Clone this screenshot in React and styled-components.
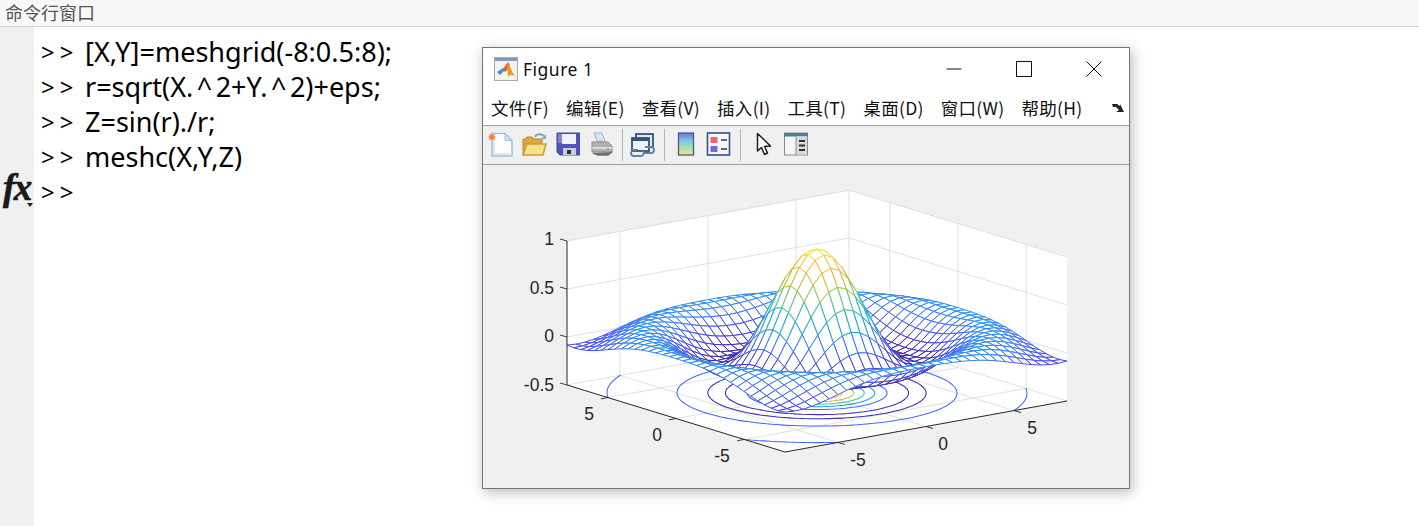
import React from "react";
import styled, { createGlobalStyle } from "styled-components";

const GlobalStyle = createGlobalStyle`
  html, body { margin: 0; padding: 0; background: #fff; }
  body { overflow: hidden; }
`;

const Page = styled.div`
  position: relative;
  width: 1419px;
  height: 526px;
  overflow: hidden;
  display: flex;
  flex-direction: column;
  background: #fff;
`;

const WindowHeader = styled.div`
  height: 26px;
  flex: none;
  padding-left: 5px;
  background: #f8f8f8;
  border-bottom: 1px solid #d4d4d4;
  color: #555;
  font: 18px/25px "Noto Sans CJK SC", "Noto Sans", sans-serif;
`;

const Console = styled.div`
  flex: 1;
  display: flex;
`;

const Gutter = styled.div`
  position: relative;
  width: 34px;
  flex: none;
  background: #f0f0f0;
`;

const FxLabel = styled.div`
  padding: 138px 0 0 3px;
  color: #1a1a1a;
  font: italic bold 37px/46px "Liberation Serif", serif;
  letter-spacing: -1.5px;
  -webkit-text-stroke: 0.6px #1a1a1a;
`;

const FxCaret = styled.div`
  position: absolute;
  left: 27px;
  top: 176px;
  border-left: 3px solid transparent;
  border-right: 3px solid transparent;
  border-top: 4px solid #222;
`;

const Lines = styled.div`
  padding: 7px 0 0 7px;
  color: #000;
  font: 27px/35px "Noto Sans", sans-serif;
`;

const Line = styled.div`
  display: flex;
  height: 35px;
  white-space: pre;
`;

const Prompt = styled.span`
  width: 44px;
  flex: none;
  font-size: 24px;
  letter-spacing: 5px;
`;

const Hat = styled.span`
  margin: 0 3.5px;
`;

/* matlab figure sits on top of the console like a desktop window */
const Figure = styled.div`
  position: absolute;
  left: 482px;
  top: 47px;
  width: 646px;
  height: 440px;
  display: flex;
  flex-direction: column;
  background: #f0f0f0;
  border: 1px solid #767676;
  box-shadow: 2px 3px 12px rgba(0, 0, 0, 0.28);
`;

const TitleBar = styled.div`
  height: 42px;
  flex: none;
  display: flex;
  align-items: center;
  padding-left: 11px;
  background: #fff;
`;

const Title = styled.span`
  margin-left: 5px;
  color: #111;
  font: 17.5px "Noto Sans", sans-serif;
  letter-spacing: 0.5px;
`;

const WindowButton = styled.div`
  width: 70px;
  height: 42px;
  display: flex;
  align-items: center;
  justify-content: center;
  margin-left: ${(p) => (p.$first ? "auto" : "0")};
`;

const MenuBar = styled.div`
  height: 35px;
  flex: none;
  display: flex;
  align-items: center;
  gap: 17px;
  padding-left: 8px;
  background: #fff;
  border-bottom: 1px solid #a0a0a0;
  color: #111;
  font: 17.5px "Noto Sans CJK SC", "Noto Sans", sans-serif;
  letter-spacing: 0.3px;
`;

const MenuItem = styled.span`
  white-space: nowrap;
`;

const MenuArrow = styled.svg`
  margin-left: auto;
  margin-right: 5px;
`;

const Toolbar = styled.div`
  height: 38px;
  flex: none;
  display: flex;
  align-items: center;
  background: #f0f0f0;
  border-bottom: 1px solid #a0a0a0;
  padding-left: 0.5px;
`;

const ToolButton = styled.div`
  width: 33.5px;
  height: 26px;
  display: flex;
  justify-content: center;
`;

const ToolSeparator = styled.div`
  width: 1px;
  height: 32px;
  margin: 0 4px;
  background: #b4b4b4;
`;

const PlotArea = styled.div`
  flex: 1;
  background: #f0f0f0;
`;

const TickLabel = styled.text`
  fill: #262626;
  font: 17.5px "Liberation Sans", sans-serif;
`;

// projection of data coords onto screen pixels, fitted to the axes corners
const project = (x, y, z) => {
  const u = (x + 8) / 16;
  const v = (y + 8) / 16;
  const w = (z + 0.5) / 1.5;
  return [785 + u * 282 - v * 218, 452 - u * 51 - v * 67 - w * 144];
};

const PARULA = [
  [0.2422, 0.1504, 0.6603],
  [0.2803, 0.2782, 0.9221],
  [0.244, 0.4358, 0.9988],
  [0.154, 0.5902, 0.9218],
  [0.0297, 0.7082, 0.8163],
  [0.1938, 0.7758, 0.6251],
  [0.5044, 0.7993, 0.348],
  [0.78, 0.75, 0.2],
  [0.95, 0.7, 0.22],
  [0.99, 0.78, 0.2],
  [0.98, 0.93, 0.1],
];

const parula = (z) => {
  const t = Math.min(1, Math.max(0, (z + 0.2172) / 1.2172)) * 10;
  const i = Math.min(9, Math.floor(t));
  const f = t - i;
  const c = PARULA[i].map((a, k) => Math.round((a + (PARULA[i + 1][k] - a) * f) * 255));
  return `rgb(${c[0]},${c[1]},${c[2]})`;
};

const sinc = (x, y) => {
  const r = Math.sqrt(x * x + y * y) + 2.2e-16;
  return Math.sin(r) / r;
};

const pt = (p) => `${p[0].toFixed(2)} ${p[1].toFixed(2)}`;
const seg = (a, b) => `M${pt(project(a[0], a[1], a[2]))}L${pt(project(b[0], b[1], b[2]))}`;

const buildGrid = () => {
  const parts = [];
  const ticks = [-5, 0, 5];
  ticks.forEach((t) => {
    parts.push(seg([t, -8, -0.5], [t, 8, -0.5]));
    parts.push(seg([-8, t, -0.5], [8, t, -0.5]));
    parts.push(seg([t, 8, -0.5], [t, 8, 1]));
    parts.push(seg([8, t, -0.5], [8, t, 1]));
  });
  [-0.5, 0, 0.5, 1].forEach((z) => {
    parts.push(seg([-8, 8, z], [8, 8, z]));
    parts.push(seg([8, 8, z], [8, -8, z]));
  });
  parts.push(seg([8, 8, -0.5], [8, 8, 1]));
  return parts.join("");
};

const buildContour = (level, step = 0.25) => {
  let d = "";
  const n = Math.round(16 / step);
  const cross = (x1, y1, z1, x2, y2, z2) => {
    const f = (level - z1) / (z2 - z1);
    return [x1 + (x2 - x1) * f, y1 + (y2 - y1) * f, -0.5];
  };
  for (let i = 0; i < n; i++) {
    for (let j = 0; j < n; j++) {
      const x = -8 + i * step;
      const y = -8 + j * step;
      const X = x + step;
      const Y = y + step;
      const a = sinc(x, y);
      const b = sinc(X, y);
      const c = sinc(X, Y);
      const e = sinc(x, Y);
      const hits = [];
      if (a < level !== b < level) hits.push(cross(x, y, a, X, y, b));
      if (b < level !== c < level) hits.push(cross(X, y, b, X, Y, c));
      if (c < level !== e < level) hits.push(cross(X, Y, c, x, Y, e));
      if (e < level !== a < level) hits.push(cross(x, Y, e, x, y, a));
      if (hits.length >= 2) d += seg(hits[0], hits[1]);
      if (hits.length === 4) d += seg(hits[2], hits[3]);
    }
  }
  return d;
};

const buildQuads = () => {
  const quads = [];
  for (let i = 31; i >= 0; i--) {
    for (let j = 31; j >= 0; j--) {
      const x = -8 + i * 0.5;
      const y = -8 + j * 0.5;
      const v = [
        [x, y],
        [x + 0.5, y],
        [x + 0.5, y + 0.5],
        [x, y + 0.5],
      ].map(([a, b]) => [a, b, sinc(a, b)]);
      quads.push(v);
    }
  }
  return quads;
};

const GRID = buildGrid();
const CONTOURS = [-0.2, 0, 0.2, 0.4, 0.6, 0.8].map((l) => ({ level: l, d: buildContour(l) }));
const QUADS = buildQuads();

const MeshQuad = ({ v }) => {
  const s = v.map((p) => project(p[0], p[1], p[2]));
  return (
    <g>
      <polygon points={s.map((p) => p.join(",")).join(" ")} fill="#fff" />
      {s.map((p, i) => {
        const k = (i + 1) % 4;
        return (
          <line
            key={i}
            x1={p[0]}
            y1={p[1]}
            x2={s[k][0]}
            y2={s[k][1]}
            stroke={parula(Math.min(v[i][2], v[k][2]))}
            strokeWidth="1"
          />
        );
      })}
    </g>
  );
};

const Tick = ({ at, dx, dy }) => {
  const p = project(at[0], at[1], at[2]);
  return <line x1={p[0]} y1={p[1]} x2={p[0] + dx} y2={p[1] + dy} stroke="#262626" strokeWidth="0.9" />;
};

const Plot = () => (
  <svg width="646" height="323" viewBox="483 165 646 323" style={{ display: "block" }}>
    <polygon points="567,241 567,385 785,452 1067,401 1067,257 850,191" fill="#fff" />
    <path d={GRID} fill="none" stroke="#dcdcdc" strokeWidth="0.9" />
    {CONTOURS.map((c) => (
      <path key={c.level} d={c.d} fill="none" stroke={parula(c.level)} strokeWidth="1.05" strokeLinecap="round" />
    ))}
    {QUADS.map((v, i) => (
      <MeshQuad key={i} v={v} />
    ))}
    <path d="M567 241V385L785 452L1067 401" fill="none" stroke="#262626" strokeWidth="1" />
    {[-0.5, 0, 0.5, 1].map((z) => (
      <Tick key={z} at={[-8, 8, z]} dx={-7} dy={-2} />
    ))}
    {[-5, 0, 5].map((t) => (
      <Tick key={"x" + t} at={[t, -8, -0.5]} dx={7} dy={2} />
    ))}
    {[-5, 0, 5].map((t) => (
      <Tick key={"y" + t} at={[-8, t, -0.5]} dx={-7} dy={1.3} />
    ))}
    <TickLabel x="554" y="245" textAnchor="end">1</TickLabel>
    <TickLabel x="554" y="294" textAnchor="end">0.5</TickLabel>
    <TickLabel x="554" y="342" textAnchor="end">0</TickLabel>
    <TickLabel x="554" y="391" textAnchor="end">-0.5</TickLabel>
    <TickLabel x="589" y="420" textAnchor="middle">5</TickLabel>
    <TickLabel x="657" y="441" textAnchor="middle">0</TickLabel>
    <TickLabel x="722" y="462" textAnchor="middle">-5</TickLabel>
    <TickLabel x="858" y="466" textAnchor="middle">-5</TickLabel>
    <TickLabel x="943" y="450" textAnchor="middle">0</TickLabel>
    <TickLabel x="1032" y="434" textAnchor="middle">5</TickLabel>
  </svg>
);

const Icon = ({ children }) => (
  <svg width="26" height="26" viewBox="0 0 26 26">
    {children}
  </svg>
);

const NewIcon = () => (
  <Icon>
    <path d="M5 1.5H18L25 8.5V24H5Z" fill="#fff" stroke="#9cc0e4" strokeWidth="1.5" />
    <path d="M18 1.5V8.5H25Z" fill="#cfe2f5" stroke="#9cc0e4" strokeWidth="1" />
    <path d="M7 8V22H23" fill="none" stroke="#dbe9f7" strokeWidth="2" />
    <path d="M5 0V10M0.5 5H9.5M2 2L8 8M8 2L2 8" stroke="#f4a66a" strokeWidth="1.1" />
    <circle cx="5" cy="5" r="2.6" fill="#ee7f35" />
  </Icon>
);

const OpenIcon = () => (
  <Icon>
    <path d="M2 22V7H4L6 5H11L13 7H21V22Z" fill="#d8aa3a" stroke="#b08a2e" strokeWidth="1" />
    <path d="M2 23L6 12H25L22 23Z" fill="#f9e08a" stroke="#c89c30" strokeWidth="1.4" />
    <path d="M14 5C15 2 20 1 23 4" fill="none" stroke="#8aa6c2" strokeWidth="2" />
    <path d="M25 2V7H20Z" fill="#8aa6c2" />
  </Icon>
);

const SaveIcon = () => (
  <Icon>
    <path d="M3 1H26V23H6L3 20Z" fill="#5353bb" stroke="#3c4a8c" strokeWidth="1" />
    <rect x="4" y="2" width="4" height="9" fill="#8284dc" />
    <rect x="8" y="2" width="14" height="10" fill="#eef3fb" />
    <rect x="9" y="16" width="13" height="7" fill="#c9cbdc" />
    <rect x="13" y="18" width="4" height="4" fill="#303040" />
  </Icon>
);

const PrintIcon = () => (
  <Icon>
    <path d="M6 1H14L17 9H9Z" fill="#d7e6f2" stroke="#a6b6c2" strokeWidth="1" />
    <path d="M4 10H20L24 14V20H4Z" fill="#b2b2b2" stroke="#8a8a8a" strokeWidth="1" />
    <path d="M4 16H24" stroke="#e6e6e6" strokeWidth="1.5" />
    <path d="M5 21L10 23H20L24 20" fill="#707070" stroke="#707070" strokeWidth="1.4" />
    <circle cx="20" cy="17" r="1" fill="#6bb36b" />
  </Icon>
);

const PreviewIcon = () => (
  <Icon>
    <rect x="6" y="2" width="17" height="13" fill="#dfe8f1" stroke="#33537c" strokeWidth="1.8" />
    <rect x="2" y="6" width="17" height="13" fill="#eef3f8" stroke="#33537c" strokeWidth="1.8" />
    <rect x="2" y="6" width="17" height="3" fill="#33537c" />
    <path d="M8 18H4a3 3 0 0 0 0 6H11a3 3 0 0 0 2-5" fill="none" stroke="#5f7fa3" strokeWidth="1.8" />
    <path d="M13 21H21a3 3 0 0 0 0-6H15" fill="none" stroke="#5f7fa3" strokeWidth="1.8" />
  </Icon>
);

const ColorbarIcon = () => (
  <Icon>
    <defs>
      <linearGradient id="cbar" x1="0" y1="0" x2="0" y2="1">
        <stop offset="0" stopColor="#7c6fd8" />
        <stop offset="0.35" stopColor="#7fc4e8" />
        <stop offset="0.65" stopColor="#a8e0b4" />
        <stop offset="1" stopColor="#f6df8a" />
      </linearGradient>
    </defs>
    <rect x="5.5" y="1" width="15" height="22" fill="url(#cbar)" stroke="#4a5a86" strokeWidth="1.3" />
  </Icon>
);

const LegendIcon = () => (
  <Icon>
    <rect x="1.5" y="1" width="22" height="22" fill="#f6f8fb" stroke="#34508c" strokeWidth="1.6" />
    <rect x="4.5" y="5" width="7" height="6" fill="#e8686c" />
    <rect x="4.5" y="14" width="7" height="6" fill="#6a6aee" />
    <path d="M15 8H21M15 17H21" stroke="#333" strokeWidth="1.6" />
  </Icon>
);

const CursorIcon = () => (
  <Icon>
    <path
      d="M8.5 1.5V19L12.5 15.5L15.5 22.5L18.5 21L15.5 14.5L21.5 14Z"
      fill="#fff"
      stroke="#1c1c1c"
      strokeWidth="1.5"
      strokeLinejoin="round"
    />
  </Icon>
);

const PanelIcon = () => (
  <Icon>
    <rect x="2.5" y="1" width="23" height="22" fill="#f4f6f8" stroke="#8a8a8a" strokeWidth="1" />
    <rect x="2" y="1" width="24" height="3.5" fill="#4f7f97" />
    <rect x="14" y="4.5" width="11" height="18" fill="#d9d9d9" />
    <path d="M14 4.5V23" stroke="#8a8a8a" strokeWidth="1" />
    <path d="M17 9H23M17 13.5H23M17 18H23" stroke="#333" strokeWidth="1.8" />
  </Icon>
);

const MatlabLogo = () => (
  <svg width="24" height="24" viewBox="0 0 24 24">
    <rect x="0.5" y="0.5" width="23" height="23" fill="#f2f2f2" stroke="#a8a8a8" />
    <rect x="1" y="1" width="22" height="3" fill="#7e9bb8" />
    <path d="M3 15L9 11L11 13L8 16L6 18Z" fill="#4f8fc8" />
    <path d="M9 12L14 5L16 8L13 13L11 15Z" fill="#d8622a" />
    <path d="M14 5C16 8 18 16 21 19C18 18 16 17 14 20C14 15 13 12 13 12Z" fill="#f09a2e" />
  </svg>
);

const MENUS = ["文件(F)", "编辑(E)", "查看(V)", "插入(I)", "工具(T)", "桌面(D)", "窗口(W)", "帮助(H)"];

const COMMANDS = [
  "[X,Y]=meshgrid(-8:0.5:8);",
  <span>
    r=sqrt(X.<Hat>^</Hat>2+Y.<Hat>^</Hat>2)+eps;
  </span>,
  "Z=sin(r)./r;",
  "meshc(X,Y,Z)",
  "",
];

const App = () => (
  <Page>
    <GlobalStyle />
    <WindowHeader>命令行窗口</WindowHeader>
    <Console>
      <Gutter>
        <FxLabel>fx</FxLabel>
        <FxCaret />
      </Gutter>
      <Lines>
        {COMMANDS.map((c, i) => (
          <Line key={i}>
            <Prompt>&gt;&gt;</Prompt>
            {c}
          </Line>
        ))}
      </Lines>
    </Console>
    <Figure>
      <TitleBar>
        <MatlabLogo />
        <Title>Figure 1</Title>
        <WindowButton $first>
          <svg width="16" height="16" viewBox="0 0 16 16">
            <path d="M0.5 8H15.5" stroke="#111" />
          </svg>
        </WindowButton>
        <WindowButton>
          <svg width="16" height="16" viewBox="0 0 16 16">
            <rect x="0.5" y="0.5" width="15" height="15" fill="none" stroke="#111" />
          </svg>
        </WindowButton>
        <WindowButton>
          <svg width="16" height="16" viewBox="0 0 16 16">
            <path d="M0.5 0.5L15.5 15.5M15.5 0.5L0.5 15.5" stroke="#111" />
          </svg>
        </WindowButton>
      </TitleBar>
      <MenuBar>
        {MENUS.map((m) => (
          <MenuItem key={m}>{m}</MenuItem>
        ))}
        <MenuArrow width="12" height="10" viewBox="0 0 12 10">
          <path d="M0 1H5L8 3V1L12 9H4L7 7L4 4H1Z" fill="#222" />
        </MenuArrow>
      </MenuBar>
      <Toolbar>
        <ToolButton><NewIcon /></ToolButton>
        <ToolButton><OpenIcon /></ToolButton>
        <ToolButton><SaveIcon /></ToolButton>
        <ToolButton><PrintIcon /></ToolButton>
        <ToolSeparator />
        <ToolButton><PreviewIcon /></ToolButton>
        <ToolSeparator />
        <ToolButton><ColorbarIcon /></ToolButton>
        <ToolButton><LegendIcon /></ToolButton>
        <ToolSeparator />
        <ToolButton><CursorIcon /></ToolButton>
        <ToolButton><PanelIcon /></ToolButton>
      </Toolbar>
      <PlotArea>
        <Plot />
      </PlotArea>
    </Figure>
  </Page>
);

export default App;
